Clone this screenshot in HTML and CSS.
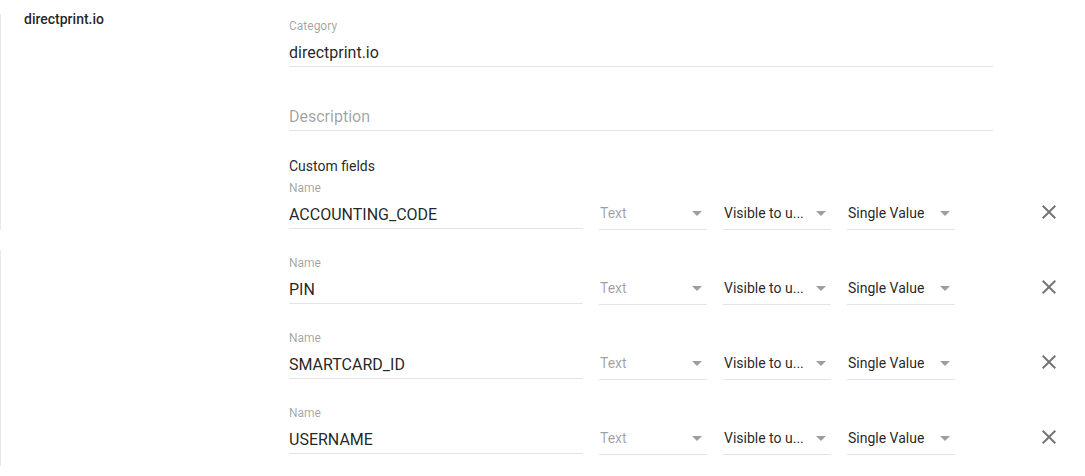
FILE: index.html
```html
<!DOCTYPE html>
<html lang="en">
<head>
    <meta charset="UTF-8">
    <meta name="viewport" content="width=device-width, initial-scale=1.0">
    <title>Category - directprint.io</title>
    <link rel="stylesheet" href="styles.css">
</head>
<body>
    <div class="page">
        <aside class="side">
            <div class="side-block">
                <div class="side-title">directprint.io</div>
            </div>
            <div class="side-block side-block-next"></div>
        </aside>

        <main class="main">
            <div class="field">
                <div class="field-label">Category</div>
                <div class="field-value">directprint.io</div>
            </div>

            <div class="field field-description">
                <div class="field-label"></div>
                <div class="field-value placeholder">Description</div>
            </div>

            <div class="section-title">Custom fields</div>

            <div class="custom-rows">
                <div class="custom-row">
                    <div class="field field-name">
                        <div class="field-label">Name</div>
                        <div class="field-value">ACCOUNTING_CODE</div>
                    </div>
                    <div class="select disabled">
                        <span>Text</span>
                        <svg class="arrow" width="10" height="5" viewBox="0 0 10 5"><path d="M0 0l5 5 5-5z"/></svg>
                    </div>
                    <div class="select">
                        <span>Visible to u...</span>
                        <svg class="arrow" width="10" height="5" viewBox="0 0 10 5"><path d="M0 0l5 5 5-5z"/></svg>
                    </div>
                    <div class="select">
                        <span>Single Value</span>
                        <svg class="arrow" width="10" height="5" viewBox="0 0 10 5"><path d="M0 0l5 5 5-5z"/></svg>
                    </div>
                    <button class="remove" title="Remove">
                        <svg width="24" height="24" viewBox="0 0 24 24"><path d="M19 6.41L17.59 5 12 10.59 6.41 5 5 6.41 10.59 12 5 17.59 6.41 19 12 13.41 17.59 19 19 17.59 13.41 12z"/></svg>
                    </button>
                </div>

                <div class="custom-row">
                    <div class="field field-name">
                        <div class="field-label">Name</div>
                        <div class="field-value">PIN</div>
                    </div>
                    <div class="select disabled">
                        <span>Text</span>
                        <svg class="arrow" width="10" height="5" viewBox="0 0 10 5"><path d="M0 0l5 5 5-5z"/></svg>
                    </div>
                    <div class="select">
                        <span>Visible to u...</span>
                        <svg class="arrow" width="10" height="5" viewBox="0 0 10 5"><path d="M0 0l5 5 5-5z"/></svg>
                    </div>
                    <div class="select">
                        <span>Single Value</span>
                        <svg class="arrow" width="10" height="5" viewBox="0 0 10 5"><path d="M0 0l5 5 5-5z"/></svg>
                    </div>
                    <button class="remove" title="Remove">
                        <svg width="24" height="24" viewBox="0 0 24 24"><path d="M19 6.41L17.59 5 12 10.59 6.41 5 5 6.41 10.59 12 5 17.59 6.41 19 12 13.41 17.59 19 19 17.59 13.41 12z"/></svg>
                    </button>
                </div>

                <div class="custom-row">
                    <div class="field field-name">
                        <div class="field-label">Name</div>
                        <div class="field-value">SMARTCARD_ID</div>
                    </div>
                    <div class="select disabled">
                        <span>Text</span>
                        <svg class="arrow" width="10" height="5" viewBox="0 0 10 5"><path d="M0 0l5 5 5-5z"/></svg>
                    </div>
                    <div class="select">
                        <span>Visible to u...</span>
                        <svg class="arrow" width="10" height="5" viewBox="0 0 10 5"><path d="M0 0l5 5 5-5z"/></svg>
                    </div>
                    <div class="select">
                        <span>Single Value</span>
                        <svg class="arrow" width="10" height="5" viewBox="0 0 10 5"><path d="M0 0l5 5 5-5z"/></svg>
                    </div>
                    <button class="remove" title="Remove">
                        <svg width="24" height="24" viewBox="0 0 24 24"><path d="M19 6.41L17.59 5 12 10.59 6.41 5 5 6.41 10.59 12 5 17.59 6.41 19 12 13.41 17.59 19 19 17.59 13.41 12z"/></svg>
                    </button>
                </div>

                <div class="custom-row">
                    <div class="field field-name">
                        <div class="field-label">Name</div>
                        <div class="field-value">USERNAME</div>
                    </div>
                    <div class="select disabled">
                        <span>Text</span>
                        <svg class="arrow" width="10" height="5" viewBox="0 0 10 5"><path d="M0 0l5 5 5-5z"/></svg>
                    </div>
                    <div class="select">
                        <span>Visible to u...</span>
                        <svg class="arrow" width="10" height="5" viewBox="0 0 10 5"><path d="M0 0l5 5 5-5z"/></svg>
                    </div>
                    <div class="select">
                        <span>Single Value</span>
                        <svg class="arrow" width="10" height="5" viewBox="0 0 10 5"><path d="M0 0l5 5 5-5z"/></svg>
                    </div>
                    <button class="remove" title="Remove">
                        <svg width="24" height="24" viewBox="0 0 24 24"><path d="M19 6.41L17.59 5 12 10.59 6.41 5 5 6.41 10.59 12 5 17.59 6.41 19 12 13.41 17.59 19 19 17.59 13.41 12z"/></svg>
                    </button>
                </div>
            </div>
        </main>
    </div>
</body>
</html>
```

FILE: styles.css
```css
* {
    margin: 0;
    padding: 0;
    box-sizing: border-box;
}

body {
    font-family: Roboto, "Liberation Sans", sans-serif;
    background: white;
    color: rgba(0, 0, 0, 0.87);
    width: 1085px;
    height: 476px;
    overflow: hidden;
}

.page {
    display: flex;
}

/* left column */
.side {
    width: 289px;
    flex-shrink: 0;
    display: flex;
    flex-direction: column;
}

.side-block {
    height: 216px;
    margin-top: 14px;
    border-left: 1px solid #e8e8e8;
    padding-left: 23px;
}

.side-block-next {
    margin-top: 20px;
}

.side-title {
    font-size: 14px;
    font-weight: 500;
    line-height: 16px;
    margin-top: -3px;
}

/* form */
.main {
    width: 704px;
    padding-top: 19px;
}

.field {
    display: flex;
    flex-direction: column;
    border-bottom: 1px solid #e4e4e4;
    padding-bottom: 3px;
}

.field-label {
    font-size: 12px;
    line-height: 14px;
    height: 14px;
    color: rgba(0, 0, 0, 0.38);
    margin-bottom: 10px;
}

.field-value {
    font-size: 16px;
    line-height: 20px;
}

.placeholder {
    color: rgba(0, 0, 0, 0.38);
}

.field-description {
    margin-top: 16px;
}

.section-title {
    margin-top: 27px;
    font-size: 14px;
    line-height: 16px;
}

.custom-rows {
    margin-top: 7px;
    width: 796px;
}

.custom-row {
    display: flex;
    align-items: flex-end;
    gap: 16px;
    margin-bottom: 27px;
}

.field-name {
    width: 294px;
}

.select {
    width: 108px;
    display: flex;
    align-items: center;
    justify-content: space-between;
    font-size: 14px;
    line-height: 20px;
    padding: 0 5px 6px 1px;
    margin-bottom: -1px;
    border-bottom: 1px solid #e4e4e4;
    white-space: nowrap;
}

.select.disabled {
    color: rgba(0, 0, 0, 0.38);
}

.arrow {
    fill: rgba(0, 0, 0, 0.38);
}

.remove {
    width: 24px;
    height: 24px;
    margin-left: 66px;
    margin-bottom: 5px;
    border: none;
    background: none;
    cursor: pointer;
    fill: rgba(0, 0, 0, 0.54);
}

.remove svg {
    display: block;
}
```
